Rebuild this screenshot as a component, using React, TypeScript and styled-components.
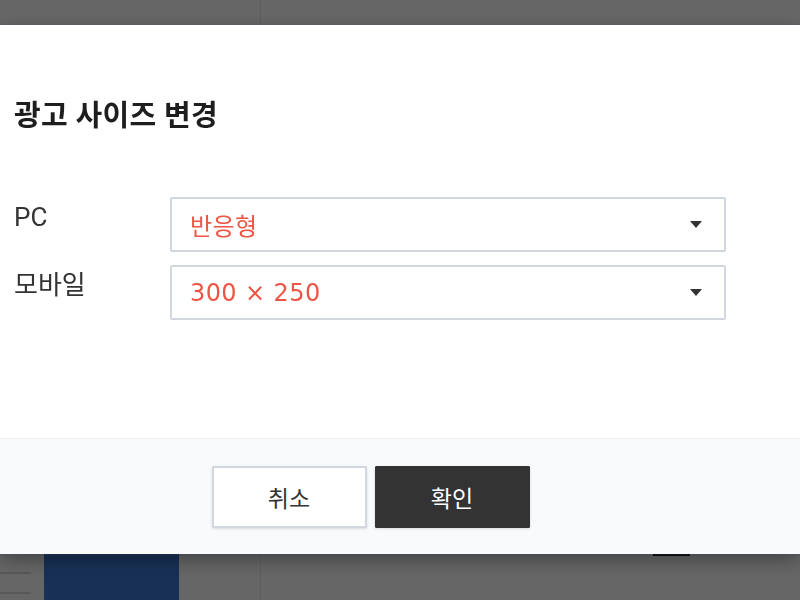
import * as React from 'react';
import styled, { createGlobalStyle } from 'styled-components';

const GlobalStyle = createGlobalStyle`
	html, body {
		margin: 0;
		padding: 0;
		height: 100%;
		overflow: hidden;
		background: #ffffff;
		font-family: Roboto, 'Noto Sans CJK KR', 'Noto Sans', sans-serif;
	}
`;

const Page = styled.div`
	display: flex;
	width: 100vw;
	height: 100vh;
`;

const Sidebar = styled.aside`
	width: 260px;
	flex-shrink: 0;
	border-right: 1px solid #ececec;
	display: flex;
	flex-direction: column;
	justify-content: flex-end;
`;

const SidebarBottom = styled.div`
	height: 46px;
	display: flex;
	gap: 13px;
	overflow: hidden;
`;

const MenuLines = styled.div`
	width: 31px;
	display: flex;
	flex-direction: column;
	gap: 18px;
	padding-top: 18px;
`;

const MenuLine = styled.span`
	height: 2px;
	background: #dcdcdc;
`;

const BlueBlock = styled.div`
	width: 135px;
	height: 60px;
	background: #3d78d6;
`;

const Main = styled.main`
	flex: 1;
	display: flex;
	flex-direction: column;
	justify-content: flex-end;
	padding-left: 392px;
`;

const ScrollMark = styled.span`
	width: 37px;
	height: 44px;
	border-top: 2px solid #222;
`;

const Overlay = styled.div`
	position: fixed;
	inset: 0;
	background: rgba(0, 0, 0, 0.6);
`;

const Modal = styled.div`
	position: fixed;
	left: 0;
	right: 0;
	top: 25px;
	height: 529px;
	background: #ffffff;
	display: flex;
	flex-direction: column;
	box-shadow: 0 0 3px rgba(60, 80, 140, 0.35), 0 6px 18px rgba(0, 0, 0, 0.35);
`;

const Body = styled.div`
	flex: 1;
	padding: 72px 74px 0 14px;
`;

const Title = styled.h2`
	margin: 0 0 62px;
	font-size: 29px;
	line-height: 38px;
	font-weight: 700;
	color: #1e1e1e;
	letter-spacing: 0.3px;
`;

const Form = styled.div`
	display: flex;
	flex-direction: column;
	gap: 13px;
`;

const Row = styled.div`
	display: flex;
	align-items: flex-start;
`;

const Label = styled.label`
	width: 156px;
	flex-shrink: 0;
	padding-top: 4px;
	font-size: 26px;
	line-height: 32px;
	color: #333333;
`;

const Select = styled.div`
	flex: 1;
	height: 55px;
	box-sizing: border-box;
	border: 2px solid #d2d7df;
	border-radius: 2px;
	display: flex;
	align-items: center;
	justify-content: space-between;
	padding: 0 22px 0 18px;
	font-family: 'DejaVu Sans', 'Noto Sans CJK KR', sans-serif;
	font-size: 24px;
	letter-spacing: 0.4px;
	color: #ec5646;
	background: #ffffff;
`;

const Caret = styled.svg`
	width: 12px;
	height: 8px;
	fill: #333333;
`;

const Footer = styled.div`
	height: 116px;
	box-sizing: border-box;
	border-top: 1px solid #eef0f2;
	background: #f9fafb;
	display: flex;
	justify-content: center;
	align-items: flex-start;
	gap: 8px;
	padding: 27px 59px 0 0;
`;

const Button = styled.button<{ $primary?: boolean }>`
	width: 155px;
	height: 62px;
	box-sizing: border-box;
	border: ${p => (p.$primary ? '1px solid #333333' : '2px solid #d3d8e0')};
	border-radius: 1px;
	background: ${p => (p.$primary ? '#333333' : '#ffffff')};
	color: ${p => (p.$primary ? '#ffffff' : '#333333')};
	font-family: inherit;
	font-size: 23px;
	box-shadow: 0 1px 3px rgba(0, 0, 0, 0.12);
	cursor: pointer;
`;

const SizeSelect = ({ value }: { value: string }) => (
	<Select>
		<span>{value}</span>
		<Caret viewBox="0 0 12 8">
			<path d="M0 0 L12 0 L6 7 Z" />
		</Caret>
	</Select>
);

export default function App() {
	return (
		<>
			<GlobalStyle />
			<Page>
				<Sidebar>
					<SidebarBottom>
						<MenuLines>
							<MenuLine />
							<MenuLine />
						</MenuLines>
						<BlueBlock />
					</SidebarBottom>
				</Sidebar>
				<Main>
					<ScrollMark />
				</Main>
			</Page>
			<Overlay />
			<Modal>
				<Body>
					<Title>광고 사이즈 변경</Title>
					<Form>
						<Row>
							<Label>PC</Label>
							<SizeSelect value="반응형" />
						</Row>
						<Row>
							<Label>모바일</Label>
							<SizeSelect value="300 × 250" />
						</Row>
					</Form>
				</Body>
				<Footer>
					<Button>취소</Button>
					<Button $primary>확인</Button>
				</Footer>
			</Modal>
		</>
	);
}
